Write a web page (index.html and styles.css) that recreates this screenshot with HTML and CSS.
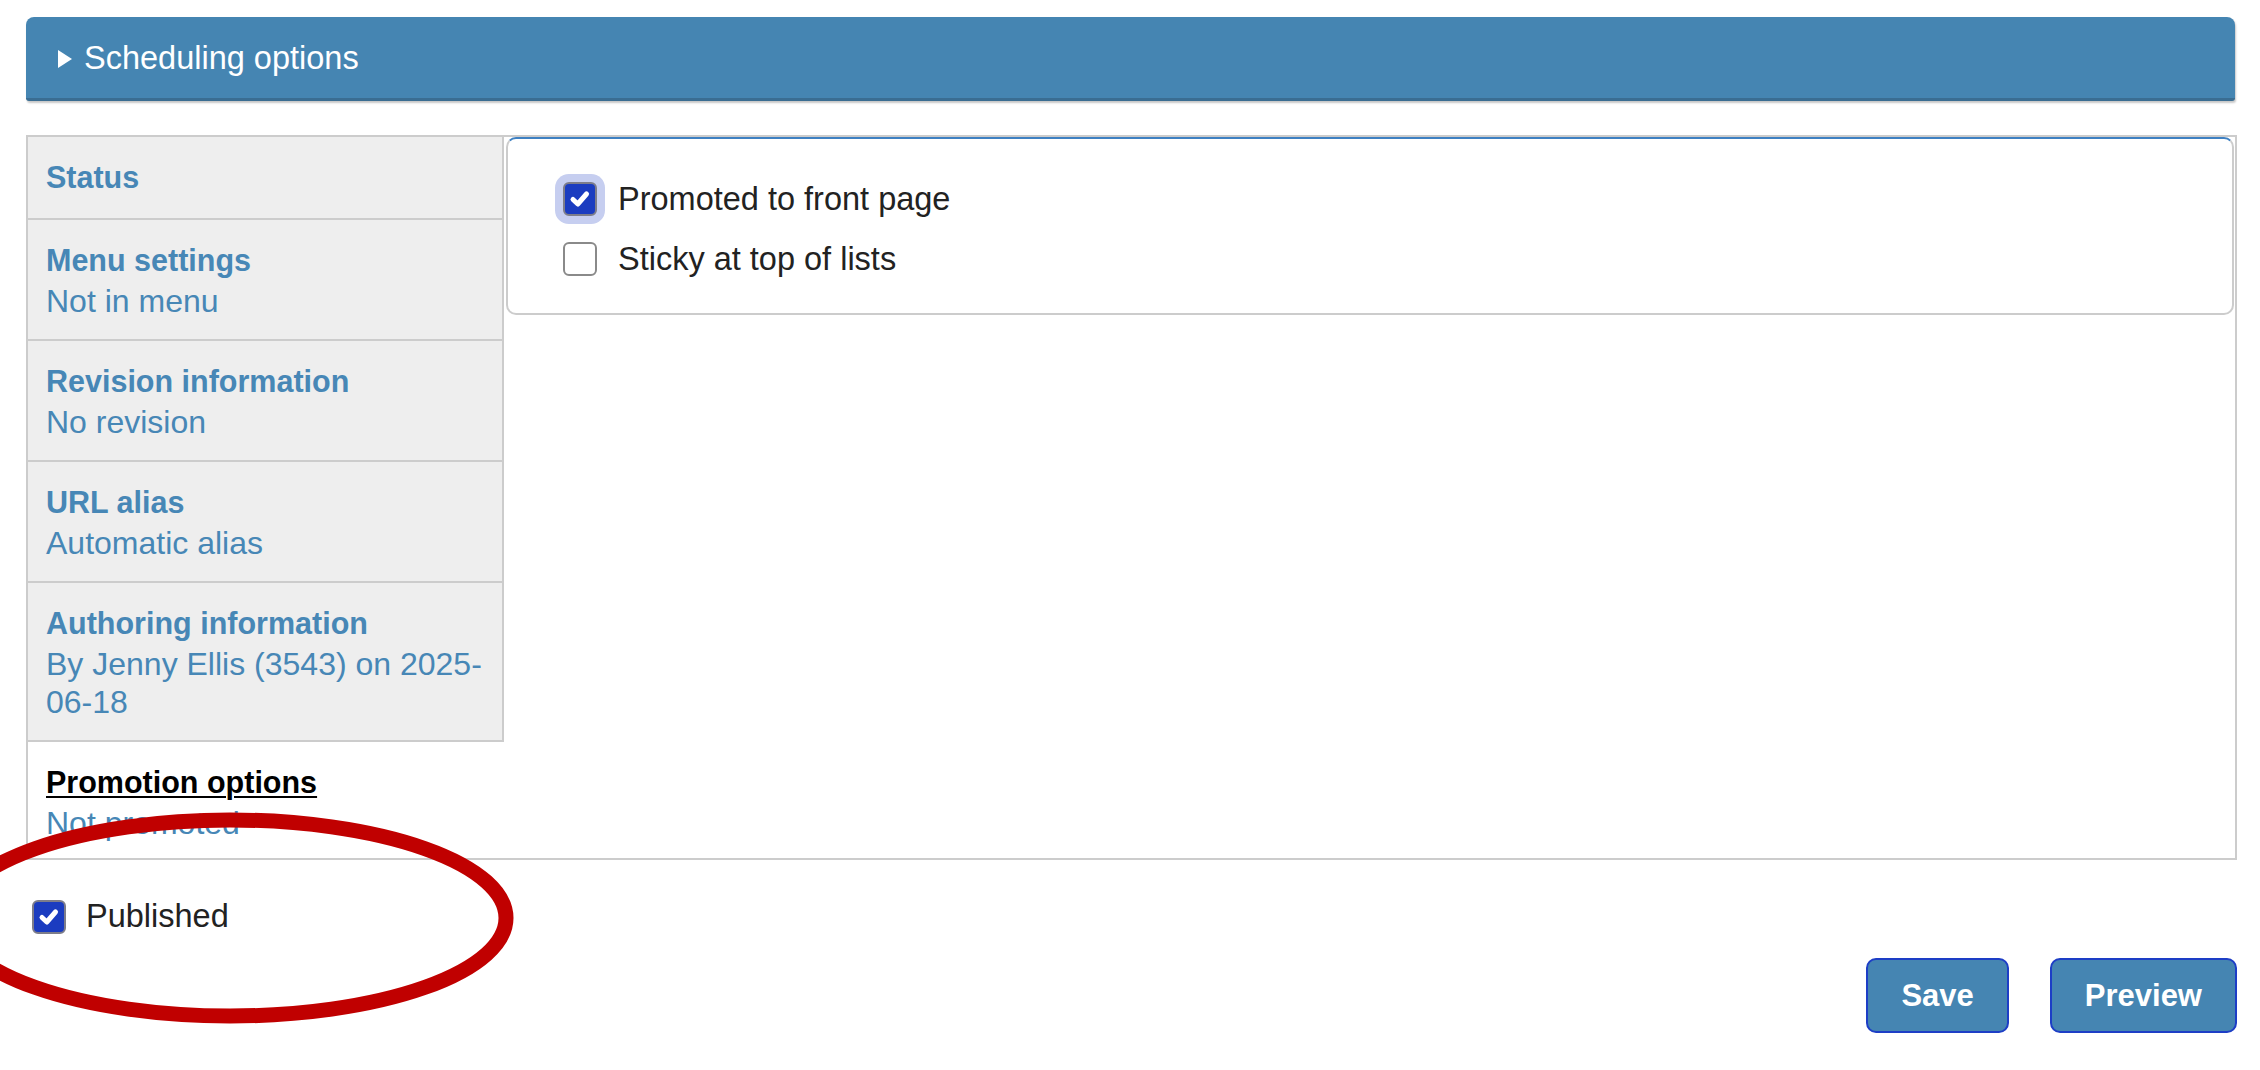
FILE: index.html
```html
<!DOCTYPE html>
<html lang="en">
<head>
<meta charset="utf-8">
<title>Promotion options</title>
<link rel="stylesheet" href="styles.css">
</head>
<body>
<div class="page">
  <div class="details-header"><span class="tri"></span>Scheduling options</div>

  <div class="tabs-box">
    <ul class="tabs-nav">
      <li class="tab"><span class="tab-title">Status</span></li>
      <li class="tab"><span class="tab-title">Menu settings</span><span class="tab-summary">Not in menu</span></li>
      <li class="tab"><span class="tab-title">Revision information</span><span class="tab-summary">No revision</span></li>
      <li class="tab"><span class="tab-title">URL alias</span><span class="tab-summary">Automatic alias</span></li>
      <li class="tab"><span class="tab-title">Authoring information</span><span class="tab-summary">By Jenny Ellis (3543) on 2025-<wbr>06-18</span></li>
      <li class="tab active"><span class="tab-title">Promotion options</span><span class="tab-summary">Not promoted</span></li>
    </ul>
    <div class="tabs-pane">
      <div class="panel">
        <label class="check-row">
          <span class="cb checked focused"><svg viewBox="0 0 30 30" class="tick"><path d="M8 15.5 L12.8 20 L21.5 10"/></svg></span>
          Promoted to front page
        </label>
        <label class="check-row">
          <span class="cb"></span>
          Sticky at top of lists
        </label>
      </div>
    </div>
  </div>

  <label class="published-row">
    <span class="cb checked"><svg viewBox="0 0 30 30" class="tick"><path d="M8 15.5 L12.8 20 L21.5 10"/></svg></span>
    Published
  </label>

  <div class="actions">
    <button class="btn">Save</button>
    <button class="btn">Preview</button>
  </div>

  <svg class="annotation" width="2260" height="1070" viewBox="0 0 2260 1070">
    <ellipse cx="230" cy="918" rx="276" ry="98" fill="none" stroke="#c00000" stroke-width="15"/>
  </svg>
</div>
</body>
</html>
```

FILE: styles.css
```css
html, body {
  margin: 0;
  padding: 0;
  background: #fff;
}

body {
  font-family: "Liberation Sans", Arial, Helvetica, sans-serif;
  font-size: 32.5px;
  color: #222;
}

.page {
  position: relative;
  width: 2260px;
  height: 1070px;
  box-sizing: border-box;
  padding: 17px 23px 0 26px;
  overflow: hidden;
}

/* Header bar */
.details-header {
  box-sizing: border-box;
  height: 84px;
  margin-right: 2px;
  display: flex;
  align-items: center;
  padding-left: 32px;
  padding-top: 2px;
  background: #4585b2;
  border-bottom: 3px solid #3a6d92;
  border-radius: 8px 8px 3px 3px;
  box-shadow: 1px 2px 2px rgba(0, 0, 0, 0.22);
  color: #fff;
  font-size: 32.5px;
}

.tri {
  width: 0;
  height: 0;
  border-left: 14px solid #fff;
  border-top: 9px solid transparent;
  border-bottom: 9px solid transparent;
  margin-right: 12px;
}

/* Vertical tabs */
.tabs-box {
  margin-top: 34px;
  display: flex;
  border: 2px solid #ccc;
}

.tabs-nav {
  list-style: none;
  margin: 0;
  padding: 0;
  width: 476px;
  flex: none;
  display: flex;
  flex-direction: column;
}

.tab {
  box-sizing: border-box;
  background: #eee;
  border-right: 2px solid #ccc;
  border-bottom: 2px solid #ccc;
  padding: 19px 8px 19px 18px;
}

.tab-title {
  display: block;
  font-weight: bold;
  font-size: 30.5px;
  line-height: 43px;
  color: #4787b6;
}

.tab-summary {
  display: block;
  font-size: 32px;
  line-height: 38px;
  color: #4787b6;
}

.tab.active {
  background: #fff;
  border-right: none;
  border-bottom: none;
  padding-bottom: 16px;
  flex: 1;
}

.tab.active .tab-title {
  color: #000;
  text-decoration: underline;
  text-decoration-thickness: 2px;
  text-underline-offset: 3px;
}

.tabs-pane {
  flex: 1;
  padding: 0 1px 0 2px;
}

.panel {
  border: 2px solid #ccc;
  border-top-color: #3e80c2;
  border-radius: 10px;
  padding: 30px 55px 24px;
}

/* Checkboxes */
.check-row {
  display: flex;
  align-items: center;
  height: 60px;
  gap: 21px;
  color: #222;
}

.cb {
  box-sizing: border-box;
  width: 34px;
  height: 34px;
  flex: none;
  border: 2px solid #8a8a8a;
  border-radius: 6px;
  background: #fff;
  display: flex;
  align-items: center;
  justify-content: center;
}

.cb.checked {
  background: #1b3cc0;
  border-color: #7d7d8a;
}

.cb.focused {
  box-shadow: 0 0 0 8px #c6cef0;
}

.tick {
  width: 30px;
  height: 30px;
  fill: none;
  stroke: #fff;
  stroke-width: 5;
  stroke-linecap: round;
  stroke-linejoin: round;
}

.published-row {
  margin-top: 39px;
  display: flex;
  align-items: center;
  height: 35px;
  gap: 20px;
  padding-left: 6px;
  color: #222;
}

/* Actions */
.actions {
  margin-top: 24px;
  display: flex;
  justify-content: flex-end;
  gap: 41px;
}

.btn {
  height: 75px;
  padding: 0 33px;
  border: 2px solid #1d3ec6;
  border-radius: 10px;
  background: #4585b2;
  color: #fff;
  font-family: "Liberation Sans", Arial, Helvetica, sans-serif;
  font-size: 31px;
  font-weight: bold;
}

/* Red annotation overlay */
.annotation {
  position: absolute;
  left: 0;
  top: 0;
  pointer-events: none;
}
```
